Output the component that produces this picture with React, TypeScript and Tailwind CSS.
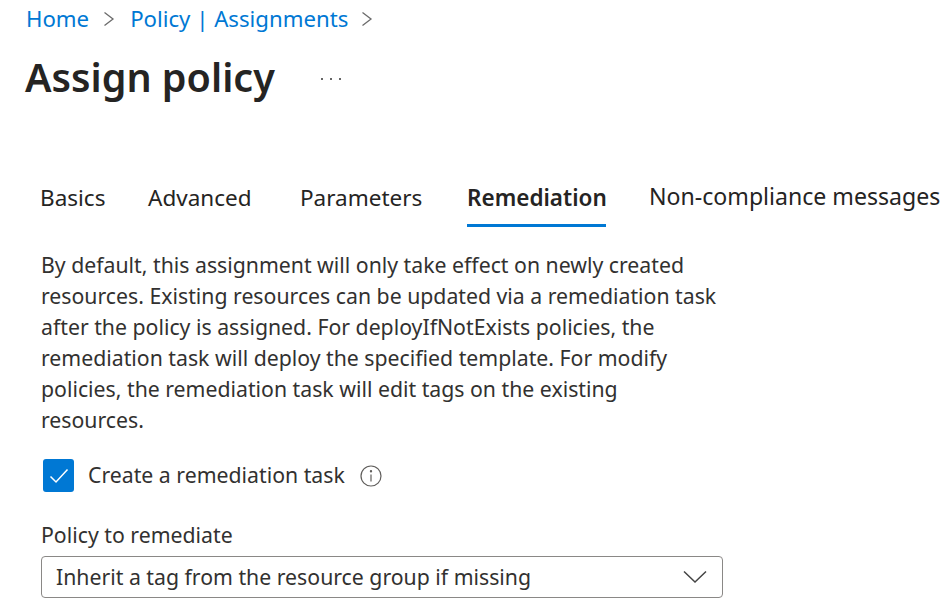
const tabs = [
  { label: 'Basics', cls: 'w-[64px] mr-[44px] pt-[11px]', active: false },
  { label: 'Advanced', cls: 'w-[106px] mr-[46px] pt-[11px]', active: false },
  { label: 'Parameters', cls: 'w-[120px] mr-[47px] pt-[11px]', active: false },
  { label: 'Remediation', cls: 'w-[139px] mr-[43px] pt-[11px]', active: true },
  { label: 'Non-compliance messages', cls: 'w-[291px] pt-[9px] text-[23.1px]', active: false },
]

const Chevron = () => (
  <svg width="12" height="16" viewBox="0 0 12 16" fill="none" stroke="#6b6b6b" strokeWidth="1.3">
    <path d="M1.5 1.5 L10 8 L1.5 14.5" />
  </svg>
)

export default function App() {
  return (
    <div className="w-[952px] h-[607px] overflow-hidden bg-white text-[#323130] font-['Noto_Sans',sans-serif]">
      <nav className="flex items-center h-[38px] pl-[26px] text-[22.2px] text-[#0078d4]">
        <a>Home</a>
        <span className="ml-[14px] mr-[15px]"><Chevron /></span>
        <a>Policy | Assignments</a>
        <span className="ml-[13px]"><Chevron /></span>
      </nav>
      <div className="flex items-center h-[79px] pl-[25px]">
        <h1 className="text-[39.5px] font-semibold text-[#252423] leading-none">Assign policy</h1>
        <span className="ml-[46px] mt-[3px] flex gap-[7px]">
          <i className="block w-[2px] h-[2px] rounded-full bg-[#333]" />
          <i className="block w-[2px] h-[2px] rounded-full bg-[#333]" />
          <i className="block w-[2px] h-[2px] rounded-full bg-[#333]" />
        </span>
      </div>
      <div className="flex mt-[53px] pl-[40px] h-[57px] text-[22.5px] text-[#252423] whitespace-nowrap">
        {tabs.map(t => (
          <div key={t.label} className={t.active ? `${t.cls} h-[57px] font-semibold border-b-[3px] border-[#0078d4]` : `${t.cls} h-[57px]`}>
            {t.label}
          </div>
        ))}
      </div>
      <p className="ml-[41px] mt-[22px] text-[21.25px] leading-[31px] whitespace-nowrap">
        By default, this assignment will only take effect on newly created<br />
        resources. Existing resources can be updated via a remediation task<br />
        after the policy is assigned. For deployIfNotExists policies, the<br />
        remediation task will deploy the specified template. For modify<br />
        policies, the remediation task will edit tags on the existing<br />
        resources.
      </p>
      <div className="flex items-center ml-[43px] mt-[24px] h-[33px]">
        <span className="flex items-center justify-center w-[31px] h-[33px] rounded-[3px] bg-[#0078d4]">
          <svg width="20" height="16" viewBox="0 0 20 16" fill="none" stroke="white" strokeWidth="1.5">
            <path d="M1.5 8.5 L7 14 L18.5 1.5" />
          </svg>
        </span>
        <span className="ml-[14px] -mt-[2px] text-[21.25px]">Create a remediation task</span>
        <svg className="ml-[15px]" width="22" height="22" viewBox="0 0 22 22" fill="none" stroke="#605e5c" strokeWidth="1.2">
          <circle cx="11" cy="11" r="10" />
          <path d="M11 9.5 V16.5" />
          <circle cx="11" cy="6.3" r="0.6" fill="#605e5c" />
        </svg>
      </div>
      <label className="block ml-[41px] mt-[27px] text-[21.25px] leading-[31px]">Policy to remediate</label>
      <div className="flex items-center justify-between ml-[41px] mt-[6px] w-[682px] h-[42px] pl-[14px] pr-[15px] border border-[#8a8886] rounded-[4px] text-[21.25px]">
        <span>Inherit a tag from the resource group if missing</span>
        <svg width="24" height="14" viewBox="0 0 24 14" fill="none" stroke="#444" strokeWidth="1.5">
          <path d="M1 1.5 L12 12 L23 1.5" />
        </svg>
      </div>
    </div>
  )
}
